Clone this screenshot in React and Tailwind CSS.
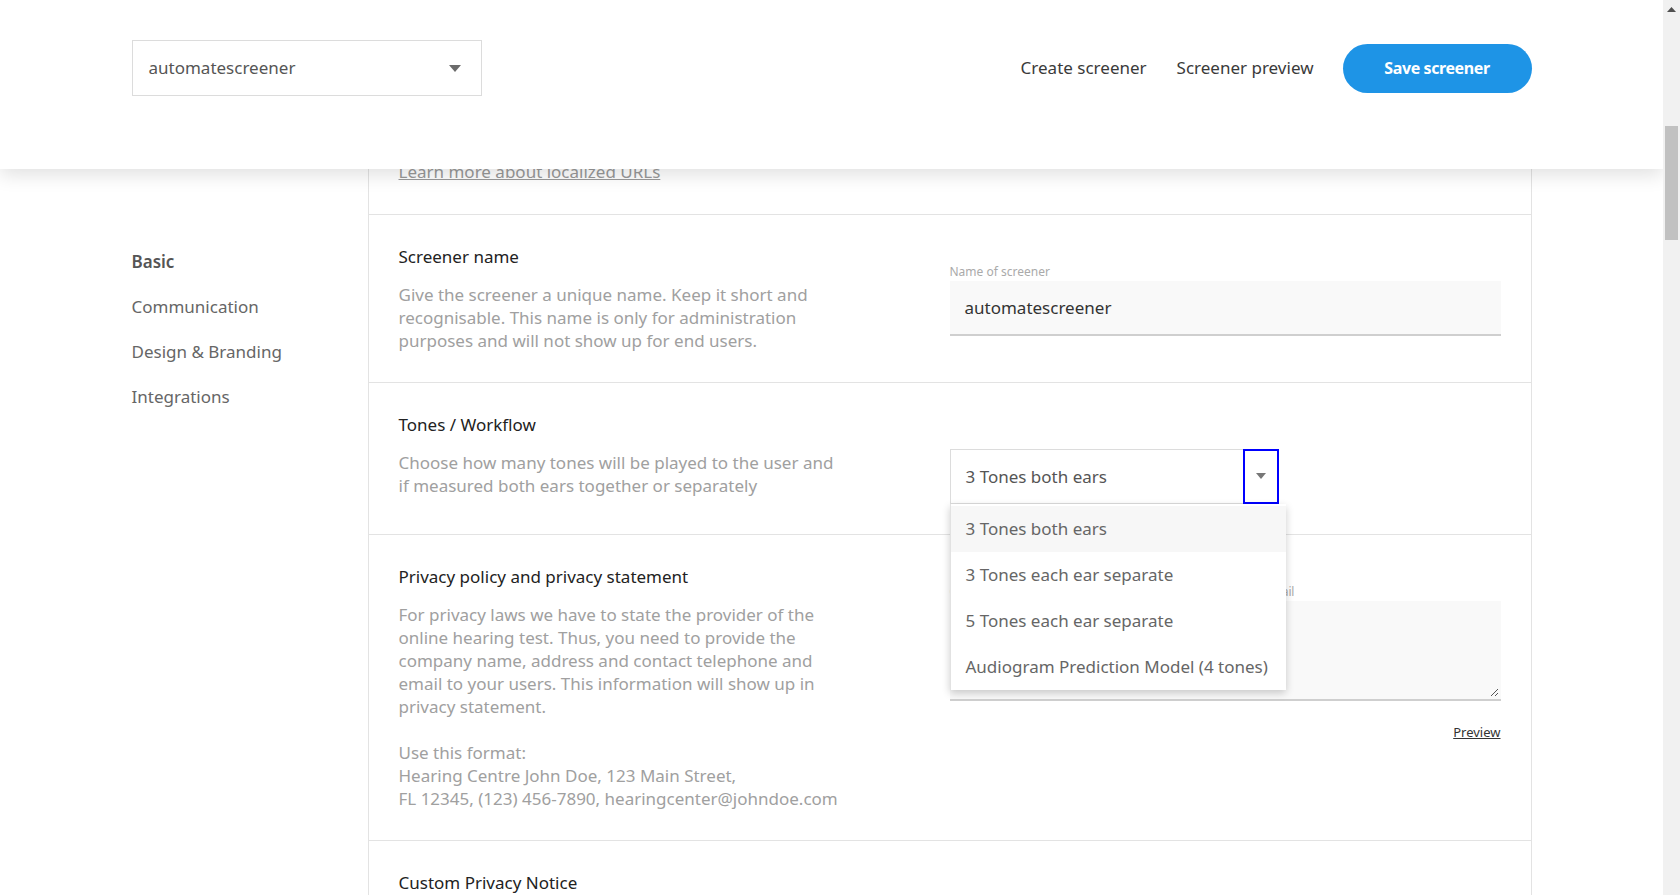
import React from "react";

const font = { fontFamily: '"Noto Sans", "Open Sans", Arial, sans-serif' };

function Caret({ className = "" }) {
  return (
    <svg width="12" height="7" viewBox="0 0 12 7" className={className}>
      <path d="M0 0 L12 0 L6 7 Z" fill="#6b6b6b" />
    </svg>
  );
}

function Row({ children, className = "" }) {
  return (
    <div className={"flex justify-between border-b border-[#e3e3e3] px-[30px] py-[30px] " + className}>
      {children}
    </div>
  );
}

function LeftText({ title, children }) {
  return (
    <div className="w-[440px]">
      <div className="text-[17px] leading-[24px] text-[#222]">{title}</div>
      <div className="mt-[14px] text-[17px] leading-[23px] text-[#a0a0a0]">{children}</div>
    </div>
  );
}

export default function App() {
  return (
    <div style={font} className="flex h-[895px] w-[1680px] overflow-hidden bg-white">
      <div className="relative h-full flex-1 overflow-hidden">
        {/* Header overlay */}
        <div className="absolute left-0 right-0 top-0 z-20 h-[169px] bg-white shadow-[0_6px_18px_rgba(0,0,0,0.12)]">
          <div className="mx-auto flex w-[1400px] items-center justify-between pt-[40px]">
            <div className="flex h-[56px] w-[350px] items-center justify-between border border-[#dcdcdc] pl-[16px] pr-[20px]">
              <span className="text-[17px] text-[#555]">automatescreener</span>
              <Caret />
            </div>
            <div className="flex items-center">
              <span className="text-[17px] text-[#3a3a3a]">Create screener</span>
              <span className="ml-[30px] text-[17px] text-[#3a3a3a]">Screener preview</span>
              <button className="ml-[29px] h-[49px] w-[189px] rounded-full bg-[#1e94e6] text-[16px] font-bold tracking-[-0.4px] text-white">
                Save screener
              </button>
            </div>
          </div>
        </div>

        {/* Page body */}
        <div className="mx-auto flex w-[1400px]">
          <nav className="w-[236px] shrink-0 pt-[239px]">
            <div className="flex h-[45px] items-center text-[17px] font-semibold text-[#555]">Basic</div>
            <div className="flex h-[45px] items-center text-[17px] text-[#666]">Communication</div>
            <div className="flex h-[45px] items-center text-[17px] text-[#666]">Design &amp; Branding</div>
            <div className="flex h-[45px] items-center text-[17px] text-[#666]">Integrations</div>
          </nav>

          <div className="flex-1 border-x border-[#e3e3e3]">
            <div className="flex h-[215px] flex-col justify-end border-b border-[#e3e3e3] px-[30px] pb-[30px]">
              <span className="text-[17px] leading-[24px] text-[#999] underline">Learn more about localized URLs</span>
            </div>

            <Row>
              <LeftText title="Screener name">
                Give the screener a unique name. Keep it short and recognisable. This name is only for administration
                purposes and will not show up for end users.
              </LeftText>
              <div className="w-[551px] pt-[18px]">
                <div className="h-[18px] text-[12px] leading-[18px] text-[#aaa]">Name of screener</div>
                <div className="flex h-[55px] items-center border-b-2 border-[#cfcfcf] bg-[#f9f9f9] px-[15px] text-[17px] text-[#333]">
                  automatescreener
                </div>
              </div>
            </Row>

            <Row className="relative z-10">
              <LeftText title="Tones / Workflow">
                Choose how many tones will be played to the user and if measured both ears together or separately
              </LeftText>
              <div className="w-[551px] pt-[36px]">
                <div className="relative w-[329px]">
                  <div className="flex h-[55px] items-center border border-[#dcdcdc] pl-[15px] text-[17px] text-[#555]">
                    3 Tones both ears
                  </div>
                  <div className="absolute bottom-0 right-0 top-0 flex w-[36px] items-start justify-center border-2 border-[#0000ff] pt-[22px]">
                    <svg width="10" height="6" viewBox="0 0 10 6">
                      <path d="M0 0 L10 0 L5 6 Z" fill="#777" />
                    </svg>
                  </div>
                  <div className="absolute left-0 top-full w-[336px] border-l border-[#e2e2e2] bg-white pt-[2px] shadow-[0_3px_8px_rgba(0,0,0,0.2)]">
                    {[
                      "3 Tones both ears",
                      "3 Tones each ear separate",
                      "5 Tones each ear separate",
                      "Audiogram Prediction Model (4 tones)",
                    ].map((o, i) => (
                      <div
                        key={o}
                        className={
                          "flex h-[46px] items-center pl-[15px] text-[17px] text-[#666] " + (i === 0 ? "bg-[#f7f7f7]" : "")
                        }
                      >
                        {o}
                      </div>
                    ))}
                  </div>
                </div>
              </div>
            </Row>

            <Row>
              <div className="w-[440px]">
                <div className="text-[17px] leading-[24px] text-[#222]">Privacy policy and privacy statement</div>
                <div className="mt-[14px] text-[17px] leading-[23px] text-[#a0a0a0]">
                  <p>
                    For privacy laws we have to state the provider of the online hearing test. Thus, you need to provide the
                    company name, address and contact telephone and email to your users. This information will show up in
                    privacy statement.
                  </p>
                  <p className="mt-[23px] whitespace-nowrap">
                    Use this format:
                    <br />
                    Hearing Centre John Doe, 123 Main Street,
                    <br />
                    FL 12345, (123) 456-7890, hearingcenter@johndoe.com
                  </p>
                </div>
              </div>
              <div className="w-[551px] pt-[18px]">
                <div className="h-[18px] whitespace-nowrap text-[12px] leading-[18px] tracking-[-0.18px] text-[#aaa]">
                  Company name, address, contact telephone number and email
                </div>
                <div className="relative h-[100px] border-b-2 border-[#cfcfcf] bg-[#f9f9f9]">
                  <svg width="9" height="9" viewBox="0 0 9 9" className="absolute bottom-[2px] right-[2px]">
                    <path d="M8 1 L1 8 M8 5 L5 8" stroke="#555" strokeWidth="1" />
                  </svg>
                </div>
                <div className="mt-[22px] text-right text-[13px] leading-[18px] text-[#333] underline">Preview</div>
              </div>
            </Row>

            <div className="px-[30px] pt-[30px]">
              <div className="text-[17px] leading-[24px] text-[#222]">Custom Privacy Notice</div>
            </div>
          </div>
        </div>
      </div>

      {/* Fake scrollbar */}
      <div className="relative h-full w-[17px] shrink-0 bg-[#f1f1f1]">
        <svg width="9" height="5" viewBox="0 0 9 5" className="absolute left-[4px] top-[7px]">
          <path d="M0 5 L9 5 L4.5 0 Z" fill="#505050" />
        </svg>
        <div className="absolute left-[2px] top-[126px] h-[114px] w-[13px] bg-[#c1c1c1]" />
      </div>
    </div>
  );
}
